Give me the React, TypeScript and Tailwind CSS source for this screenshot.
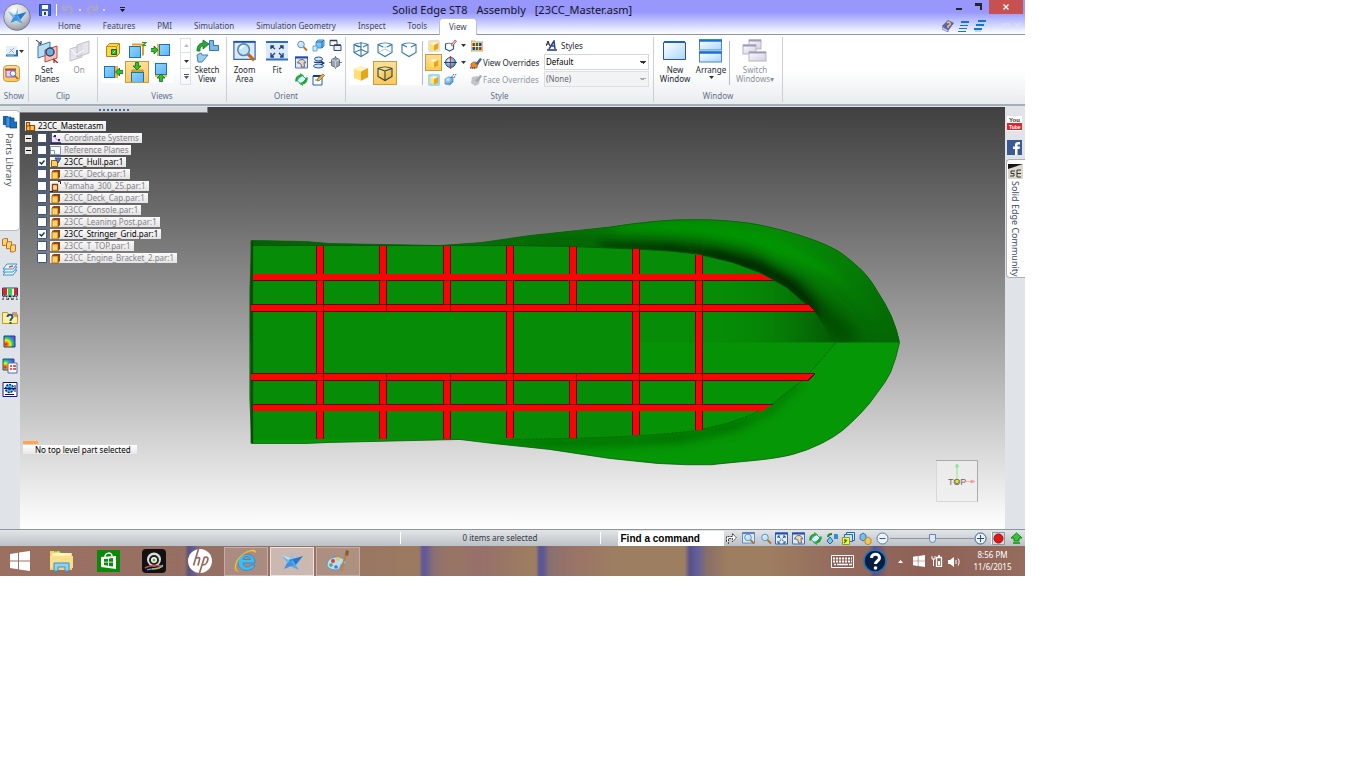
import React, { useState } from "react";

type IconProps = { w?: number; h?: number; children: React.ReactNode; className?: string; box?: string };

/** Small pixel-grid drawing; its user units are pixels unless a box is given. */
function Icon({ w = 12, h, children, className = "", box }: IconProps) {
  const height = h ?? w;
  return (
    <svg width={w} height={height} viewBox={box ?? `0 0 ${w} ${height}`} className={`shrink-0 ${className}`} aria-hidden="true">
      {children}
    </svg>
  );
}

function Caret({ color = "#333", className = "" }: { color?: string; className?: string }) {
  return (
    <Icon w={5} h={3} className={className}>
      <path d="M0 0h5L2.500 3z" fill={color} />
    </Icon>
  );
}

function Defs() {
  return (
    <svg width="0" height="0" className="absolute" aria-hidden="true">
      <defs>
        <linearGradient id="blue" x1="0" y1="0" x2="1" y2="1"><stop offset="0" stopColor="#8fd4fb" /><stop offset="1" stopColor="#5cb5f5" /></linearGradient>
        <linearGradient id="pane" x1="0" y1="0" x2="1" y2="1"><stop offset="0" stopColor="#fff" /><stop offset="1" stopColor="#a9d6fa" /></linearGradient>
        <linearGradient id="greyPane" x1="0" y1="0" x2="1" y2="1"><stop offset="0" stopColor="#fbfbfd" /><stop offset="1" stopColor="#d2d0df" /></linearGradient>
        <linearGradient id="gold" x1="0" y1="0" x2="1" y2="1"><stop offset="0" stopColor="#fff0a8" /><stop offset="1" stopColor="#efae18" /></linearGradient>
        <radialGradient id="orb" cx=".4" cy=".25" r=".8"><stop offset="0" stopColor="#fff" /><stop offset=".6" stopColor="#c9ccd2" /><stop offset="1" stopColor="#8d9299" /></radialGradient>
        <radialGradient id="ball" cx=".35" cy=".3" r=".8"><stop offset="0" stopColor="#d9f1ff" /><stop offset="1" stopColor="#2f7dc0" /></radialGradient>
        <radialGradient id="heat" cx=".2" cy=".75" r=".95"><stop offset="0" stopColor="#f40d0d" /><stop offset=".22" stopColor="#fb9a0a" /><stop offset=".4" stopColor="#f4f01c" /><stop offset=".58" stopColor="#24d84a" /><stop offset=".76" stopColor="#1d8ef0" /><stop offset="1" stopColor="#a423df" /></radialGradient>
      </defs>
    </svg>
  );
}

const Arrow = ({ t }: { t: string }) => <path d="M0-4 4 0H1.500V3.500H-1.500V0H-4z" fill="#2fc12f" stroke="#0b6d16" strokeWidth=".8" transform={t} />;

const Lens = ({ w = 13, back }: { w?: number; back?: React.ReactNode }) => (
  <Icon w={w} box="0 0 13 13">
    {back}
    <path d="m8.500 8 3.500 3.500" stroke="#c4691d" strokeWidth="1.800" />
    <circle cx="6" cy="5.500" r="3.300" fill="#bfe6fd" stroke="#5b87b0" strokeWidth=".9" />
    <path d="M4.200 5a2 2 0 0 1 2-1.500" stroke="#fff" fill="none" />
  </Icon>
);

const ZoomAreaBack = <><path d="M.5 1h12v10H.5z" fill="#dcebfc" stroke="#3768b8" strokeWidth=".7" /><path d="M.3 1h12.400" stroke="#1d4fae" /></>;

const FitIcon = ({ w = 13 }: { w?: number }) => (
  <Icon w={w} h={w} box="0 0 13 13">
    <path d="M.5 1h12v11H.5z" fill="#e4f0fd" stroke="#3563b9" />
    <path d="M0 1.500h13" stroke="#1d4fae" strokeWidth="2" />
    <path d="m3.500 4.500 6 5.500M9.500 4.500l-6 5.500" stroke="#1b3d95" fill="none" strokeDasharray="2.500 2" />
    <path d="M3 6V4h2m3 0h2v2m0 3v2H8m-3 0H3V9" stroke="#1b3d95" fill="none" />
  </Icon>
);

const PanIcon = () => (
  <Icon w={13}>
    <path d="M.5 1h12v11H.5z" fill="#dbe9fa" stroke="#4770b8" />
    <path d="M0 1.500h13" stroke="#244fa8" strokeWidth="2" />
    <path d="M2.500 7c1-3 3-3.500 4.500-3.500S10.500 5 10.500 7L9 6.500 9.500 11h-3L6 8 4 7z" fill="#e3d8cb" stroke="#6d5a4c" strokeWidth=".9" />
  </Icon>
);

const RotateIcon = () => (
  <Icon w={13}>
    <path d="M7 2 2 7.500 6 11l5-5z" fill="#d8f3ff" stroke="#4390be" />
    <path d="M1.500 8.500a5 5 0 0 1 4-6M11.500 4.500a5 5 0 0 1-4.500 6" fill="none" stroke="#1fa42c" strokeWidth="2.200" />
    <path d="m5 0 4 2.500-4 2zM8 13l-4-2.500L8 8.500z" fill="#2bb536" />
  </Icon>
);

const SpinIcon = () => (
  <Icon w={13}>
    <ellipse cx="6.500" cy="3" rx="4" ry="2" fill="#cfe7f8" stroke="#1e4e94" />
    <ellipse cx="6.500" cy="10" rx="5" ry="2" fill="#cfe7f8" stroke="#1e4e94" />
    <path d="M2 6c3 1.500 6-1 9 1M9 5l3 2-3 2" stroke="#1d3c7e" strokeWidth="1.300" fill="none" />
  </Icon>
);

const CubeSmall = () => (
  <Icon w={13}>
    <path d="M1 10 6 5" stroke="#4a6e96" strokeDasharray="2 1" />
    <path d="M4 3 6 1h6v6l-2 2H4z" fill="url(#blue)" stroke="#3f91cb" />
    <path d="M4 3h6v6M10 3l2-2" fill="none" stroke="#2d6ea5" />
    <path d="M1 7h4v5H1z" fill="#ccecff" stroke="#4a93c9" strokeWidth=".8" />
  </Icon>
);

const CopyWin = () => (
  <Icon w={13}>
    <path d="M1 1.500h7v5H1z" fill="#fff" stroke="#344c79" />
    <path d="M5 6.500h7v5H5z" fill="#e9f1fa" stroke="#344c79" />
    <path d="M1 1.500h7M5 6h7" stroke="#303a50" strokeWidth="1.500" />
  </Icon>
);

const GreyTarget = () => (
  <Icon w={13}>
    <path d="M6.500 0v13M0 6.500h13" stroke="#7b8690" />
    <path d="M2.500 3.500 6.500 1.500l4 2v6l-4 2-4-2z" fill="#98a4ad" stroke="#65717d" />
    <path d="M2.500 3.500 6.500 5.500l4-2M6.500 5.500v6" fill="none" stroke="#d7dfe5" strokeWidth=".8" />
  </Icon>
);

const SketchPen = () => (
  <Icon w={13}>
    <path d="M1 3h9v9H1z" fill="#fff" stroke="#2a5da8" />
    <path d="M1 3h9" stroke="#143e88" strokeWidth="2" />
    <path d="m5 8 1-3 5-4 1.500 1.500-5 5z" fill="#f5b83a" stroke="#805517" strokeWidth=".7" />
    <path d="M3 7h3" stroke="#3ba84a" />
  </Icon>
);

function Cube({ w = 18, fill = "none", stroke = "#2568a6", extra }: { w?: number; fill?: string; stroke?: string; extra?: React.ReactNode }) {
  return (
    <Icon w={w} box="0 0 18 18">
      <path d="M2 4.500c4-2 10-2 14 0v8L9 16.500 2 12.500z" fill={fill} stroke={stroke} strokeWidth="1.100" />
      <path d="M2 4.500 9 7l7-2.500M9 7v9.500" fill="none" stroke={stroke} strokeWidth="1.100" />
      {extra}
    </Icon>
  );
}

const OpenCube = ({ extra }: { extra?: React.ReactNode }) => (
  <Icon w={18}>
    <path d="M2 4.500c4-2 10-2 14 0v8L9 16.500 2 12.500zM2 4.500 7 7M16 4.500 11 7" fill="none" stroke="#2f7ab5" strokeWidth="1.100" />
    {extra}
  </Icon>
);

const GoldCube = ({ w = 12, tint = "none" }: { w?: number; tint?: string }) => (
  <Icon w={w} box="0 0 14 14">
    <rect x="0" y="0" width="14" height="14" rx="2" fill={tint} />
    <path d="M2 4 7 6v6.500L2 10.500z" fill="#ffdf75" />
    <path d="M2 4 6.500 2 12 3.500 7 6z" fill="#fff3bf" />
    <path d="M7 6 12 3.500V10l-5 2.500z" fill="#e5a719" />
  </Icon>
);

function ViewFace({ side }: { side: "front" | "back" | "left" | "right" | "top" | "bottom" }) {
  const sq = (x: number, y: number, w: number, h: number) => <rect x={x} y={y} width={w} height={h} fill="url(#blue)" stroke="#1d6fc1" />;
  return (
    <Icon w={20}>
      {side === "front" && (<><path d="M3.500 6.500 6.500 3.500h10v10l-3 3h-10z" fill="#ffd54b" stroke="#b8860b" /><path d="M3.500 6.500h10v10M13.500 6.500l3-3" fill="none" stroke="#c3920f" /><path d="M8.500 9.500h5v5h-5z" fill="#32ba32" stroke="#0d7017" /><path d="m10 13 2-2" stroke="#d7ffbe" /></>)}
      {side === "back" && (<><path d="M5 4.500h11v11" fill="none" stroke="#e5a018" strokeWidth="2" />{sq(2.5, 6.5, 11, 11)}<path d="M15 2.500h4l-3 3h3" fill="none" stroke="#1d9b29" strokeWidth="1.200" /></>)}
      {side === "left" && (<><path d="M6 4h2v12H6z" fill="#f0b429" />{sq(8.5, 4.5, 10, 11)}<Arrow t="translate(3 10) rotate(90)" /></>)}
      {side === "right" && (<><path d="M12 4h3v12h-3z" fill="#f0b429" />{sq(1.5, 4.5, 10, 11)}<Arrow t="translate(16.500 10) rotate(-90)" /></>)}
      {side === "top" && (<><path d="M5 8h11v2H5z" fill="#f5c339" stroke="#986d18" strokeWidth=".7" />{sq(4.5, 10.5, 12, 10)}<Arrow t="translate(10 4) rotate(180)" /></>)}
      {side === "bottom" && (<>{sq(4.5, 1.5, 11, 11)}<path d="M4 13h12v2H4z" fill="#f5c339" /><Arrow t="translate(10 16)" /></>)}
    </Icon>
  );
}

const WindowIcon = () => (
  <Icon w={24} h={24}>
    <path d="M.5 3.500h22v17H.5z" fill="url(#pane)" stroke="#2853b4" />
    <path d="M1 3h21" stroke="#1f62c0" strokeWidth="2" />
  </Icon>
);
const ArrangeIcon = () => (
  <Icon w={24} h={24}>
    {[1, 13].map((y) => (
      <g key={y}>
        <rect x=".5" y={y} width="22" height="10" fill="url(#pane)" stroke="#4386d3" />
        <path d={`M0 ${y + 0.5}h23`} stroke="#1d6fd3" strokeWidth="2.500" />
      </g>
    ))}
  </Icon>
);
const SwitchIcon = () => (
  <Icon w={26} h={24}>
    {[[7, 1, 12], [1, 6, 13], [7, 13, 17]].map(([x, y, w]) => (
      <g key={y}>
        <rect x={x} y={y} width={w} height="9" fill="url(#greyPane)" stroke="#b7b4ca" />
        <path d={`M${x} ${y + 0.5}h${w}`} stroke="#9e9bb8" strokeWidth="2" />
      </g>
    ))}
  </Icon>
);

const SolidEdgeMark = () => (
  <>
    <path d="M1 6 13 10 10 19z" fill="#c6e2f8" />
    <path d="M13 2v9L8 14z" fill="#8fc3ee" />
    <path d="M9 11 23 7 15 17z" fill="#1f7bd2" />
    <path d="M12 10 19 21 10 17z" fill="#5aa8ea" />
    <path d="M4 20 9 10 14 16z" fill="#3c93df" />
    <path d="M1 6 10 12 7 14z" fill="#78b1e0" />
  </>
);

function Group({ label, className, children }: { label: string; className: string; children: React.ReactNode }) {
  return (
    <section className={`flex shrink-0 flex-col border-r border-[#ccd0d6] ${className}`}>
      <div className="flex h-[53px] items-start">{children}</div>
      <h2 className="text-center text-[8px] leading-3 text-[#60718a]">{label}</h2>
    </section>
  );
}

function BigButton({ icon, lines, dim, caret, className }: { icon: React.ReactNode; lines: string[]; dim?: boolean; caret?: boolean; className: string }) {
  return (
    <button className={`flex shrink-0 flex-col items-center whitespace-nowrap text-[8px] leading-[9px] ${dim ? "text-[#8d929b]" : "text-[#1c2733]"} ${className}`}>
      <span className="flex h-7 items-center">{icon}</span>
      {lines.map((l) => <span key={l}>{l}</span>)}
      {caret && <Caret className="mt-0.5" />}
    </button>
  );
}

const hot = "border border-[#c79a45] bg-gradient-to-b from-[#fbdf93] to-[#ffc955]";

function IconButton({ label, on, className = "size-[17px]", children }: { label: string; on?: boolean; className?: string; children: React.ReactNode }) {
  return <button aria-label={label} className={`flex shrink-0 items-center justify-center ${on ? hot : ""} ${className}`}>{children}</button>;
}

const tabs = ["Home", "Features", "PMI", "Simulation", "Simulation Geometry", "Inspect", "Tools", "View"];

function Header() {
  return (
    <header className="relative border-b border-[#8a97a3] bg-gradient-to-b from-[#9797fc] from-35% to-white">
      <button aria-label="Application menu" className="absolute left-[3px] top-[3px]">
        <Icon w={28} box="0 0 28 28">
          <circle cx="14" cy="14" r="13.300" fill="url(#orb)" stroke="#74798a" strokeWidth=".9" />
          <g transform="translate(4 3) scale(.85)"><SolidEdgeMark /></g>
        </Icon>
      </button>
      <div className="grid h-[19px] grid-cols-[1fr_auto_1fr] items-center">
        <div className="flex h-[14px] items-center gap-[5px] pl-[39px]">
          <IconButton label="Save" className="size-[12px]">
            <Icon w={12}><path d="M.5.5h11v11H.5z" fill="#3760c0" stroke="#25479a" /><path d="M3 1h6v4H3z" fill="#fff" /><path d="M3 7h6v5H3z" fill="#e7eefc" /><path d="M5 8h2v3H5z" fill="#25479a" /></Icon>
          </IconButton>
          <span className="h-3 w-px bg-white" />
          <IconButton label="Undo" className="size-[12px]"><Icon w={12}><path d="M1 1v5h5M1.500 5.500C5 1 10 2 10 6c0 3-2 4-5 5" fill="none" stroke="#a9a8c4" strokeWidth="2" /></Icon></IconButton>
          <span className="size-[2px] bg-[#d7d7f3]" />
          <IconButton label="Redo" className="size-[12px]"><Icon w={12}><path d="M11 1v5H6M10.500 5.500C7 1 2 2 2 6c0 3 2 4 5 5" fill="none" stroke="#a9a8c4" strokeWidth="2" /></Icon></IconButton>
          <span className="size-[2px] bg-[#d7d7f3]" />
          <button aria-label="Customize toolbar" className="ml-2.5 flex flex-col items-center gap-px"><span className="h-px w-[5px] bg-[#222]" /><Caret color="#111" /></button>
        </div>
        <h1 className="flex gap-[9px] text-[11px] leading-[18px] text-[#15151f]"><span>Solid Edge ST8</span><span>Assembly</span><span>[23CC_Master.asm]</span></h1>
        <div className="flex h-full items-start justify-end pr-0.5">
          <IconButton label="Minimize" className="h-[14px] w-5"><Icon w={6} h={6}><path d="M0 4h6v2H0z" fill="#24242c" /></Icon></IconButton>
          <IconButton label="Restore" className="h-[13px] w-5"><Icon w={7} h={7}><path d="M0 0h7v7H5V3H0z" fill="#24242c" /></Icon></IconButton>
          <IconButton label="Close" className="h-[14px] w-[34px] bg-[#c75050]"><Icon w={6}><path d="m.5.5 5 5m0-5-5 5" stroke="#fff" strokeWidth="1.300" /></Icon></IconButton>
        </div>
      </div>
      <div className="flex h-[15px] items-end justify-between">
        <nav className="flex pl-[47px] text-[8px] leading-[14px] text-[#42465c]">
          {tabs.map((t) => (
            <a key={t} href="#ribbon" className={t === "View" ? "-mb-px ml-px h-[17px] rounded-t-sm border border-b-0 border-[#b8bfcf] bg-white px-[9px] leading-[16px]" : "px-[11px] pt-px"}>{t}</a>
          ))}
        </nav>
        <div className="flex items-center gap-1 pb-0.5 pr-[3px]">
          <IconButton label="Help" className="h-3 w-3"><Icon w={12}><path d="M0 6 6 0l6 3-6 8z" fill="#5562ba" /><path d="m0 7 6 3v2L0 9z" fill="#e8e8f8" stroke="#4e559c" strokeWidth=".6" /><path d="M5 3c2-2 4 0 3 2L6 6v2" fill="none" stroke="#ffc44e" strokeWidth="1.500" /></Icon></IconButton>
          <IconButton label="Tile" className="h-3 w-3"><Icon w={12}><path d="M3 1h8v2H3zM2 5h8v1H2zM1 8h8v1H1zM0 11h8v1H0z" fill="#1475cc" /></Icon></IconButton>
          <IconButton label="Cascade" className="h-3 w-3"><Icon w={12}><path d="M4 0h8v2H4zM2 4h8v2H2zM0 8h8v2H0z" fill="#1475cc" /><path d="M1 10h6v2H1zM11 2h1v5h-1z" fill="#b9dcf6" /></Icon></IconButton>
          <Icon w={32} h={8}><path d="M2 5h5M13 2h6v4h-6zM25 1l5 5m0-5-5 5" fill="none" stroke="#dedff8" strokeWidth="1.200" /></Icon>
        </div>
      </div>
    </header>
  );
}

const plane = (c: string, f: string, x: number, y: number) => <path d={`M${x} ${y + 4}l12-4v12l-12 4z`} fill={f} stroke={c} fillOpacity=".75" />;

function Ribbon() {
  return (
    <div id="ribbon" className="flex border-b-2 border-[#a4aeb8] bg-gradient-to-b from-white from-50% to-[#e9ecef] pb-0.5 pt-[2px]">
      <Group label="Show" className="w-[29px]">
        <div className="flex flex-col items-start gap-[5px] pl-[3px] pt-1.5">
          <button aria-label="Show PMI" className="flex h-[17px] items-center gap-px pl-0.5">
            <Icon w={13}><path d="M1 1h11v10H1z" fill="#e5f1fa" /><path d="M1 10.500h11V5" stroke="#2c6eb4" strokeWidth="2" fill="none" /><path d="m4 8 5-5M5 4l4 4" stroke="#9ba7b9" /><path d="M2 9h7v2H2z" fill="#63a9dd" /></Icon>
            <Caret />
          </button>
          <IconButton label="PathFinder" on className="size-[17px] rounded-sm"><Icon w={14}><path d="M1 3h9v7H1z" fill="#e8cdf0" stroke="#9257a6" /><path d="M0 2.500h11" stroke="#b34d37" strokeWidth="2" /><circle cx="8" cy="6.500" r="2.800" fill="#eef6ff" stroke="#5a6fc0" /><path d="m10 9 3 3" stroke="#b45e1c" strokeWidth="1.600" /></Icon></IconButton>
        </div>
      </Group>
      <Group label="Clip" className="w-[69px]">
        <BigButton className="ml-0.5 w-8" lines={["Set", "Planes"]} icon={<Icon w={24}>{plane("#3d7aa9", "#9cd7ee", 3, 3)}{plane("#c8453b", "#f7a9a2", 10, 7)}<circle cx="15" cy="13" r="4" fill="#74afd8" stroke="#274c80" strokeWidth="1.500" /><path d="m1 1 5 4M3 5h3V2" stroke="#17275b" fill="none" /><path d="m18 20 5 4M19 20v4" stroke="#a51e1e" strokeWidth="1.200" fill="none" /></Icon>} />
        <BigButton className="w-8" dim lines={["On"]} icon={<Icon w={24}>{plane("#c2bfce", "#dddbe5", 3, 6)}{plane("#c2bfce", "#dddbe5", 10, 2)}<path d="m4 10 5 6 8-5" stroke="#fff" fill="none" /></Icon>} />
      </Group>
      <Group label="Views" className="w-[129px]">
        <div className="ml-[3px] mt-px grid grid-cols-3 bg-white">
          <IconButton label="Front view" className="h-[23px] w-6"><ViewFace side="front" /></IconButton>
          <IconButton label="Back view" className="h-[23px] w-6"><ViewFace side="back" /></IconButton>
          <IconButton label="Left view" className="h-[23px] w-6"><ViewFace side="left" /></IconButton>
          <IconButton label="Right view" className="h-[22px] w-6"><ViewFace side="right" /></IconButton>
          <IconButton label="Top view" on className="h-[22px] w-6"><ViewFace side="top" /></IconButton>
          <IconButton label="Bottom view" className="h-[22px] w-6"><ViewFace side="bottom" /></IconButton>
        </div>
        <div className="ml-[7px] mt-px grid w-[11px] grid-rows-3 border border-[#dde0e5]">
          <IconButton label="Scroll up" className="h-[14px] w-[10px] border-b border-[#dde0e5]"><Caret color="#b9bdc4" className="rotate-180" /></IconButton>
          <IconButton label="Scroll down" className="h-[15px] w-[10px] border-b border-[#dde0e5]"><Caret /></IconButton>
          <IconButton label="More views" className="h-[15px] w-[10px]"><Icon w={5} h={5}><path d="M0 0h5v1H0zM0 2h5L2.500 5z" fill="#555" /></Icon></IconButton>
        </div>
        <BigButton className="w-8" lines={["Sketch", "View"]} icon={<Icon w={24}><path d="M2 12c0-6 3-8 6-8V1l6 4-6 5V7C6 7 5 8 5 12z" fill="#29a83a" stroke="#0c6e1d" strokeWidth=".8" /><path d="M14.500 1.500h4v5h5v5h-9z" fill="#7cb9e8" stroke="#2f76b3" /><path d="m2 16 4-2 1 2h6l-6 7H3z" fill="#9bcdf0" stroke="#3a80bd" /></Icon>} />
      </Group>
      <Group label="Orient" className="w-[119px]">
        <BigButton className="ml-px w-[33px]" lines={["Zoom", "Area"]} icon={<Lens w={23} back={ZoomAreaBack} />} />
        <BigButton className="w-8" lines={["Fit"]} icon={<Icon w={22}><path d="M0 2h22v18H0z" fill="#dcebfb" /><path d="M0 2h22M0 19.500h22" stroke="#2e6fc4" strokeWidth="2" /><path d="m5 6 4 3m4 0 4-3M9 13l-4 4m8-4 4 4M5 9V6h3m6 0h3v3M5 13v4h3m6 0h3v-4" stroke="#203e92" strokeWidth="1.300" fill="none" /></Icon>} />
        <div className="grid grid-cols-3">
          <IconButton label="Zoom"><Lens back={<path d="M5.500 3v4m-1-3 1-2 1 2" stroke="#1d3982" />} /></IconButton>
          <IconButton label="Look at face"><CubeSmall /></IconButton>
          <IconButton label="Previous view"><CopyWin /></IconButton>
          <IconButton label="Pan"><PanIcon /></IconButton>
          <IconButton label="Spin about"><SpinIcon /></IconButton>
          <IconButton label="Common views"><GreyTarget /></IconButton>
          <IconButton label="Rotate"><RotateIcon /></IconButton>
          <IconButton label="Sketch orientation"><SketchPen /></IconButton>
        </div>
      </Group>
      <Group label="Style" className="w-[308px]">
        <div className="ml-[3px] grid grid-cols-3 bg-white">
          <IconButton label="Wireframe" className="h-6 w-6"><OpenCube extra={<path d="M9 2v14M2 12.500l7-3 7 3M4 5.500l5 1.500" fill="none" stroke="#2568a6" />} /></IconButton>
          <IconButton label="Visible and hidden edges" className="h-6 w-6"><OpenCube extra={<path d="M3 12 9 9l6 3M7 7h4" fill="none" stroke="#a8cae2" />} /></IconButton>
          <IconButton label="Visible edges" className="h-6 w-6"><OpenCube /></IconButton>
          <IconButton label="Shaded" className="h-6 w-6"><GoldCube w={20} /></IconButton>
          <IconButton label="Shaded with visible edges" on className="h-6 w-6"><Cube fill="url(#gold)" stroke="#23455f" /></IconButton>
        </div>
        <span className="ml-px mt-1 h-11 w-px bg-[#b8bcc2]" />
        <div className="ml-[2px] grid grid-cols-[17px_17px_8px]">
          <IconButton label="Drop shadow"><GoldCube tint="#e9e1c8" /></IconButton>
          <IconButton label="Sharpen"><Icon w={13}><path d="M1.500 5c2-1 6-1 8 0v5l-4 2-4-2z" fill="#fff" stroke="#2c5c8c" strokeWidth="1.200" /><path d="m7 6 4-5 1.500 1-4 5z" fill="#f2d06a" stroke="#a5538f" strokeWidth=".8" /></Icon></IconButton>
          <IconButton label="Sharpen options" className="h-[17px] w-2"><Caret /></IconButton>
          <IconButton label="Floor shadow" on><GoldCube /></IconButton>
          <IconButton label="Section"><Icon w={13}><circle cx="6.500" cy="6.500" r="5" fill="url(#ball)" stroke="#285684" /><path d="M6.500 0v13" stroke="#c53943" strokeWidth="1.300" /><path d="M0 6.500h13" stroke="#27486c" /></Icon></IconButton>
          <IconButton label="Section options" className="h-[17px] w-2"><Caret /></IconButton>
          <IconButton label="Reflection"><GoldCube tint="#9dd9f9" /></IconButton>
          <IconButton label="High quality"><Icon w={13}><path d="M1 6 4 4h5v5l-3 3-5-1z" fill="url(#ball)" stroke="#69a0c8" strokeWidth=".8" /><path d="m7 5 3-4M10 5l2-4" stroke="#456b98" strokeDasharray="2 1" /></Icon></IconButton>
        </div>
        <div className="ml-px grid grid-cols-[76px_105px] text-[8px] text-[#1c2733]">
          <IconButton label="Color manager" className="h-[17px] w-[17px]"><Icon w={12}><path d="M0 1h4l1 1h7v9H0z" fill="#f7e3a5" stroke="#a08c4e" strokeWidth=".7" />{["#b52424", "#197a2a", "#1b2fb0"].map((c, i) => <g key={c} fill={c}><rect x={1.5 + i * 3.3} y="3" width="2.400" height="3" /><rect x={1.5 + (2 - i) * 3.3} y="7" width="2.400" height="3" /></g>)}</Icon></IconButton>
          <button className="flex h-[17px] items-center gap-1 pl-0.5"><Icon w={11}><path d="M0 6 2 1l2 5M1 4h2" stroke="#222" fill="none" /><path d="M3 9 8 1l1 8M5 6h4" stroke="#24409a" strokeWidth="1.500" fill="none" /><path d="M1 10h10" stroke="#1d337e" strokeWidth="1.500" /></Icon>Styles</button>
          <button className="flex h-[17px] items-center gap-px whitespace-nowrap pl-0.5"><Icon w={12}><path d="M1 7c2-3 5-2 7-1l-1 5H1z" fill="#e98a34" stroke="#9e4f17" strokeWidth=".7" /><path d="m5 7 5-6 2 1-4 6z" fill="#42658d" /><path d="M0 11h6" stroke="#222" strokeDasharray="1 1" /></Icon>View Overrides</button>
          <select aria-label="View style" className="h-4 appearance-none border border-[#d3d7dd] bg-white bg-[linear-gradient(45deg,transparent_50%,#333_50%),linear-gradient(-45deg,transparent_50%,#333_50%)] bg-[length:3px_3px] bg-[position:right_5px_center,right_2px_center] bg-no-repeat px-px text-[8px] text-black"><option>Default</option></select>
          <button disabled className="flex h-[17px] items-center gap-px whitespace-nowrap pl-0.5 text-[#92979e]"><Icon w={12}><path d="M2 3 7 2l3 2-1 6-4 2-4-3z" fill="#c5c3cd" /><path d="m5 7 5-6 2 1-4 6z" fill="#a6a5b1" /></Icon>Face Overrides</button>
          <select aria-label="Face style" disabled className="h-4 appearance-none border border-[#dedfe2] bg-[#f2f3f4] bg-[linear-gradient(45deg,transparent_50%,#aaa_50%),linear-gradient(-45deg,transparent_50%,#aaa_50%)] bg-[length:3px_3px] bg-[position:right_5px_center,right_2px_center] bg-no-repeat px-px text-[8px] text-[#676b70] opacity-100"><option>(None)</option></select>
        </div>
      </Group>
      <Group label="Window" className="w-[129px]">
        <BigButton className="ml-[3px] w-9" lines={["New", "Window"]} icon={<WindowIcon />} />
        <BigButton className="w-9" caret lines={["Arrange"]} icon={<ArrangeIcon />} />
        <span className="mt-1 h-11 w-px bg-[#b8bcc2]" />
        <BigButton className="w-[50px]" dim lines={["Switch", "Windows▾"]} icon={<SwitchIcon />} />
      </Group>
    </div>
  );
}

const OrangePart = () => <Icon w={11}><path d="M2 2 4 1h6v7l-2 2H2z" fill="#8e3f0c" /><path d="M2 3h6v7H2z" fill="#ffd35d" stroke="#a85f14" strokeWidth=".8" /></Icon>;
const AssemblyIcon = () => <Icon w={11}><path d="M1.500 1.500h3v3h5v5h-8z" fill="#ffc64c" stroke="#93470a" strokeWidth="1.200" /><path d="M1.500 5h3.500v4.500" fill="none" stroke="#93470a" /></Icon>;

type Row = { name: string; on?: boolean; icon?: React.ReactNode; group?: boolean };
const rows: Row[] = [
  { name: "Coordinate Systems", group: true, icon: <Icon w={11}><path d="M1 0v10h10" fill="none" stroke="#14206e" strokeWidth="1.500" /><path d="m3 3 7 6" stroke="#a23bc2" strokeDasharray="2 1" /><path d="M4 2h2v2H4zM8 6h2v2H8z" fill="#302070" /></Icon> },
  { name: "Reference Planes", group: true, icon: <Icon w={11}><path d="M.5 1.500h10v8H.5z" fill="#fff" stroke="#7c97d6" /><path d="M.5 9.500v-4h4v4" fill="none" stroke="#7c97d6" /></Icon> },
  { name: "23CC_Hull.par:1", on: true, icon: <Icon w={11}><path d="M1.500 3.500h6v6h-6z" fill="#ffd35d" stroke="#a15a12" /><path d="M5 1h6L8 6z" fill="#4582d2" stroke="#143c8a" strokeWidth=".8" /></Icon> },
  { name: "23CC_Deck.par:1" },
  { name: "Yamaha_300_25.par:1", icon: <Icon w={11}><path d="M2.500 3.500h5v6h-5z" fill="#ffe39b" stroke="#8e3f0c" strokeWidth="1.300" /><path d="M0 10.500h3M8 .5h2.500V3" stroke="#222" fill="none" /></Icon> },
  { name: "23CC_Deck_Cap.par:1" },
  { name: "23CC_Console.par:1" },
  { name: "23CC_Leaning Post.par:1" },
  { name: "23CC_Stringer_Grid.par:1", on: true },
  { name: "23CC_T_TOP.par:1" },
  { name: "23CC_Engine_Bracket_2.par:1" },
];

const tag = "flex h-[10px] items-center bg-gradient-to-b from-[#fafafa] to-[#e3e3e3]";

function PathFinder() {
  const [shown, setShown] = useState(rows.map((r) => !!r.on));
  return (
    <div className="pl-[5px] pt-[7px] text-[8px] leading-[10px]">
      <div className="flex h-3 items-center"><span className={`${tag} gap-0.5 pr-0.5 text-black`}><AssemblyIcon />23CC_Master.asm</span></div>
      <ul>
        {rows.map((r, i) => (
          <li key={r.name} className="flex h-3 items-center">
            {r.group
              ? <button aria-label={`Expand ${r.name}`} className="flex h-[7px] w-[7px] items-center justify-center bg-[#e8e8e0]"><span className="h-px w-[5px] bg-black" /></button>
              : <span className="w-[7px]" />}
            <label className="ml-[5px] flex items-center gap-[3px]">
              <span className="grid place-items-center">
                <input type="checkbox" checked={shown[i]} onChange={() => setShown(shown.map((v, k) => (k === i ? !v : v)))} className="peer col-start-1 row-start-1 size-[10px] appearance-none rounded-[1px] border border-[#35588c] bg-white" />
                <Icon w={6} h={5} className="pointer-events-none invisible col-start-1 row-start-1 peer-checked:visible"><path d="m.5 2 2 2 3-3.500" stroke="#112d55" strokeWidth="1.400" fill="none" /></Icon>
              </span>
              <span className={`${tag} gap-[3px] pr-[3px] ${shown[i] ? "text-black" : "text-[#85818a]"}`}>{r.icon ?? <OrangePart />}{r.name}</span>
            </label>
          </li>
        ))}
      </ul>
    </div>
  );
}

const hull = "M252 241 306 242 330 244 385 245 440 246 482 243 530 236 573 231.500 610 227.500 Q636 223.500 659 221.500 T711 220.300 Q731 221 749 223.500 Q765 226 780 230 Q800 235 817 241.500 T843 254.500 T863 271.500 Q872 281 878 292 Q886 304 892 317 Q898 332 900 343 Q897 358 891 373 Q886 383 878 393 Q870 405 860 415 T843 431 Q834 438 822 444 Q808 451 793 455 T750 461.500 T712 465.300H687L658 464 610 459 550 450 493 444 460 440 330 443 306 444H252L250 400V290z";
const innerTop = "M252 246H510L573 247 636 249.500 670 251.500 698 254.500 733 263 760 273 787 288 803 302 815 312 836 343";
const deck = innerTop + " 823 359 810 373 800 383 772 405 750 416 727 424 698 431 670 434 627 437 577 439 510 440H252z";
const innerBottom = "M836 343 823 359 810 373 800 383 772 405 750 416 727 424 698 431 670 434 627 437 577 439 510 440";
const ribs = [
  { x: 316, t: 246, b: 440, full: true }, { x: 379, t: 246, b: 440 }, { x: 443, t: 246, b: 440 }, { x: 506, t: 246, b: 439, full: true },
  { x: 569, t: 247, b: 439 }, { x: 632, t: 249, b: 436, full: true }, { x: 695, t: 255, b: 431, full: true },
];

function Boat() {
  return (
    <svg viewBox="20 108 985 421" className="col-start-1 row-start-1 h-full w-full" role="img" aria-label="Hull model, top view">
      <defs>
        <clipPath id="hullClip"><path d={hull} /></clipPath>
        <clipPath id="deckClip"><path d={deck} /></clipPath>
        <clipPath id="upper"><path d="M240 200H910V343H240z" /></clipPath>
        <linearGradient id="topHull" x1="0" x2="1"><stop offset="0" stopColor="#055f05" /><stop offset=".6" stopColor="#058005" /><stop offset=".8" stopColor="#058c05" /><stop offset="1" stopColor="#057205" /></linearGradient>
        <linearGradient id="deckFade" x1="0" x2="1"><stop offset=".8" stopColor="#078407" stopOpacity="0" /><stop offset="1" stopColor="#045304" /></linearGradient>
        <linearGradient id="bowFade" x1="0" y1="0" x2="0" y2="1"><stop offset=".4" stopColor="#046004" stopOpacity="0" /><stop offset="1" stopColor="#046304" stopOpacity=".8" /></linearGradient>
        <filter id="soft" x="-20%" y="-40%" width="140%" height="180%"><feGaussianBlur stdDeviation="9" /></filter>
        <filter id="soft2" x="-20%" y="-40%" width="140%" height="180%"><feGaussianBlur stdDeviation="4" /></filter>
      </defs>
      <path d={hull} fill="#059705" />
      <g clipPath="url(#hullClip)">
        <path d="M240 200H910V343H240z" fill="url(#topHull)" />
        <g clipPath="url(#upper)">
          <path d="M610 228C720 212 810 232 880 320L850 290C800 255 740 236 620 234z" fill="#069806" filter="url(#soft2)" />
          <path d="M800 220H910V343H800z" fill="url(#bowFade)" />
          <path d="M470 244 560 238 640 240 700 243 750 254 800 280 840 318 862 343 836 343 803 300 760 271 698 252 636 247z" fill="#034203" filter="url(#soft)" />
          <path d="M600 246 670 247 720 253 760 264 795 284 812 302 820 318 803 302 787 288 760 273 698 254z" fill="#012401" stroke="#022c02" strokeWidth="5" filter="url(#soft2)" />
        </g>
        <path d="M490 442 636 438 698 432 760 416 800 384 770 412 735 430 680 442 560 447z" fill="#046204" stroke="#046a04" strokeWidth="4" opacity=".75" filter="url(#soft2)" />
      </g>
      <path d={deck} fill="#068c06" />
      <g clipPath="url(#deckClip)">
        <path d="M252 246H840V343H252z" fill="url(#deckFade)" />
        <path d="M640 343H840V440H640z" fill="#059705" opacity=".6" />
      </g>
      <path d={innerTop} fill="none" stroke="#045004" strokeWidth=".8" />
      <path d={innerBottom} fill="none" stroke="#056005" strokeWidth=".8" strokeDasharray="3 1" />
      <path d={hull} fill="none" stroke="#086008" strokeWidth=".8" />
      <path d="M252 241V444" stroke="#064e06" strokeWidth="2.500" />
      <g shapeRendering="crispEdges">
        {ribs.map((r) => (
          <g key={r.x}>
            {(r.full ? [[r.t, r.b]] : [[r.t, 311], [374, r.b]]).map(([a, b]) => (
              <g key={a}><rect x={r.x} y={a} width="8" height={b - a} fill="#6d0000" /><rect x={r.x + 1} y={a} width="6" height={b - a} fill="#fa0505" /></g>
            ))}
          </g>
        ))}
        <path d="M253 274H761L774 281H253z" fill="#6d0000" /><path d="M253 274H761L772 280H253z" fill="#fa0505" />
        <path d="M251 304H808L816 312H251z" fill="#6d0000" /><path d="M251 305H808L814 311H251z" fill="#fa0505" />
        <path d="M251 374H815V375L808 382H251z" fill="#6d0000" /><path d="M251 375H814L807 381H251z" fill="#fa0505" />
        <path d="M253 405H773L762 412H253z" fill="#6d0000" /><path d="M253 406H771L762 412H253z" fill="#fa0505" />
        {ribs.map((r) => <path key={r.x} d={`M${r.x + 7.5} 305v7M${r.x + 7.5} 374v8`} stroke="#8d0000" />)}
      </g>
    </svg>
  );
}

function ViewCube() {
  return (
    <Icon w={43} h={43}>
      <path d="M.5.5h41v41H.5z" fill="#efefef" fillOpacity=".7" stroke="#d8d8d8" />
      <path d="M0 .5h41.500v41" stroke="#a9a9a9" fill="none" />
      <text x="12" y="25" fontSize="9" fontFamily="Liberation Sans, sans-serif" fill="#666">TOP</text>
      <path d="M21 21V4M19.500 7h3L21 4z" stroke="#8ee78e" fill="#8ee78e" />
      <path d="M24 21.500h14M35 20v3l4-1.500z" stroke="#f1a0a0" fill="#f1a0a0" strokeWidth=".8" />
      <circle cx="21" cy="21.500" r="2.200" fill="#e5e52f" stroke="#7e7e42" />
    </Icon>
  );
}

const sideIcons: [string, React.ReactNode][] = [
  ["Family of parts", <Icon w={16}>{[0, 4, 8].map((d) => <path key={d} d={`M${d + 0.5} ${d * 0.8 + 1.5}l2-1h3v6l-2 1h-3z`} fill="#ffd37c" stroke="#bd6f16" />)}</Icon>],
  ["Layers", <Icon w={16}>{[10, 7, 4].map((y) => <path key={y} d={`M1 ${y + 3}l4-5h10l-4 5z`} fill="#e9f5ff" stroke="#3c92d2" />)}<path d="m7 5 4-1" stroke="#d44" strokeWidth="1.300" /></Icon>],
  ["Sensors", <Icon w={16}><path d="M.5 2h15v8H.500z" fill="#fff" stroke="#124f87" /><path d="M1 2h4v7H1zM12 2h3v7h-3z" fill="#ed2020" /><path d="M6 2h4v7H6z" fill="#30d34d" /><path d="M1 14c0-6 4-6 4 0M6 14l2-5 2 5M11 14c0-6 4-6 4 0" stroke="#111" fill="none" strokeDasharray="2 1" /></Icon>],
  ["Feature library", <Icon w={16}><path d="M.5 2.500h5l1 2h9v9H.500z" fill="#fff1a0" stroke="#c69b1f" /><path d="M10 3h5M12 6h4" stroke="#c84b25" /><path d="M5.500 7c0-3 5-3 5 0 0 2-2 1-2 4M8.500 12v2" stroke="#1d5790" strokeWidth="2" fill="none" /></Icon>],
  ["Simulation", <Icon w={14}><path d="M1 1h11v11H1z" fill="url(#heat)" stroke="#273f79" /></Icon>],
  ["Simulation results", <Icon w={16}><path d="M1 1h11v11H1z" fill="url(#heat)" stroke="#125b94" /><path d="M6 5h9v10H6z" fill="#fff" stroke="#4b6fae" /><path d="M8 8h2m1 0h3M8 11h2m1 0h3" stroke="#d22" strokeWidth="1.300" /></Icon>],
  ["Engineering reference", <Icon w={16}><path d="M1 .500h14v14H1z" fill="#fff" stroke="#14177e" /><circle cx="7.500" cy="6.500" r="4" fill="#40c4e8" stroke="#10228c" strokeWidth="1.500" strokeDasharray="2 1" /><circle cx="7.500" cy="6.500" r="1.500" fill="#10228c" /><path d="M2 6.500h12M13 3v7M3 12.500h9" stroke="#10124c" /></Icon>],
];

function Workspace() {
  return (
    <div className="flex flex-1 bg-[#e0e4e8] pt-px">
      <aside className="flex w-5 shrink-0 flex-col items-center">
        <button className="mt-[3px] flex h-[121px] w-full flex-col items-center gap-1 rounded-r border border-l-0 border-[#b5bcc4] bg-white pt-[3px] text-[9px] text-[#4c4f60]">
          <Icon w={15}><path d="M1 2h5v9H1z" fill="#1a65b4" /><path d="M4 3h5v10H4z" fill="#3f94dc" stroke="#0f4c92" strokeWidth=".7" /><path d="M8 4h4v4h3v6H8z" fill="#1971c2" stroke="#0a437e" strokeWidth=".7" /></Icon>
          <span className="whitespace-nowrap leading-[11px] [writing-mode:vertical-rl]">Parts Library</span>
        </button>
        <div className="flex flex-col gap-0.5 pt-1">
          {sideIcons.map(([l, i]) => <IconButton key={l} label={l} className="h-[22px] w-5">{i}</IconButton>)}
        </div>
      </aside>
      <main className="grid flex-1 grid-cols-1 grid-rows-[minmax(0,1fr)] bg-gradient-to-b from-[#404040] to-white">
        <Boat />
        <div className="z-10 col-start-1 row-start-1 flex flex-col items-start justify-between">
          <div>
            <div className="flex h-[6px] w-[188px] items-center justify-center border-b border-r border-[#80848a] bg-[#d5d9dd]"><span className="w-[30px] border-t-2 border-dotted border-[#456a9b]" /></div>
            <PathFinder />
          </div>
          <div className="mb-[75px] ml-[3px]">
            <div className="h-[3px] w-[15px] bg-[#ffa54c]" />
            <p className="mt-px bg-gradient-to-b from-white to-[#e8e8e8] pl-3 pr-1.5 text-[8px] leading-[9px] text-black">No top level part selected</p>
          </div>
        </div>
        <div className="z-10 col-start-1 row-start-1 self-end justify-self-end pb-[26px] pr-[26px]"><ViewCube /></div>
      </main>
      <aside className="flex w-5 shrink-0 flex-col items-center pt-2">
        <IconButton label="YouTube" className="h-4 w-4"><Icon w={15} h={15}><path d="M0 0h15v15H0z" fill="#fff" /><path d="M0 7h15v7H0z" fill="#e0242b" /><text x="2" y="6" fontSize="6" fontWeight="bold" fontFamily="Liberation Sans, sans-serif" fill="#333">You</text><text x="2" y="12.500" fontSize="5" fontWeight="bold" fontFamily="Liberation Sans, sans-serif" fill="#fff">Tube</text></Icon></IconButton>
        <IconButton label="Facebook" className="mt-2 h-4 w-4"><Icon w={15}><path d="M0 0h15v15H0z" fill="#3b5998" /><path d="M8 15V9H6V6.500h2V5c0-2 1-3 3-3h2v2.500h-1.500c-.8 0-1 .4-1 1v1h2.500L12.500 9h-2v6z" fill="#fff" /></Icon></IconButton>
        <button className="mt-1 flex h-[119px] w-[19px] flex-col items-center gap-0.5 self-end rounded-l border border-r-0 border-[#a9b0b8] bg-white pt-1 text-[9px] text-[#3c4a63]">
          <Icon w={15}><path d="M0 0h15v15H0z" fill="#dcd9cf" /><path d="M0 0h15L0 5z" fill="#161616" /><path d="M7 7H3v2.500h3V12H2M13 6H9v7h4M9 9.500h4" stroke="#333" fill="none" /></Icon>
          <span className="whitespace-nowrap leading-[11px] [writing-mode:vertical-rl]">Solid Edge Community</span>
        </button>
      </aside>
    </div>
  );
}

function StatusBar() {
  const [zoom, setZoom] = useState(51);
  const b = "h-[17px] w-[16px]";
  return (
    <footer className="flex h-[17px] items-center border-t border-[#8d969f] bg-gradient-to-b from-[#e2e5e8] to-[#bcc1c6] text-[8px] text-[#303840]">
      <span className="h-3 flex-1 border-r border-white" />
      <span className="h-3 w-[200px] border-r border-white text-center leading-3">0 items are selected</span>
      <input aria-label="Find a command" defaultValue="Find a command" className="ml-[17px] h-[15px] w-[106px] bg-white px-[3px] font-[Liberation_Sans,sans-serif] text-[10px] font-bold text-black" />
      <IconButton label="Run command" className={b}><Icon w={13}><path d="M1.500 9.500v-5h6V1.500l4 4.500-4 3.500v-3h-4v5z" fill="#fff" stroke="#222" strokeWidth=".9" strokeDasharray="2 1" /></Icon></IconButton>
      <span className="flex w-[134px] justify-between pl-px">
        <IconButton label="Zoom area" className={b}><Lens back={ZoomAreaBack} /></IconButton>
        <IconButton label="Zoom" className={b}><Lens /></IconButton>
        <IconButton label="Fit" className={b}><FitIcon /></IconButton>
        <IconButton label="Pan" className={b}><PanIcon /></IconButton>
        <IconButton label="Rotate" className={b}><RotateIcon /></IconButton>
        <IconButton label="Sketch view" className={b}><Icon w={13}><path d="M1 9 4 5l3 4-3 3z" fill="#79c7e9" stroke="#1f6da5" /><path d="M2 5c0-3 2-3 4-3" stroke="#179027" strokeWidth="2" fill="none" /><path d="M8 2h3l1 1v4H8z" fill="#2c8edb" /></Icon></IconButton>
        <IconButton label="Views" className={b}><Icon w={13}><path d="M4.500.500h8v8h-8z" fill="#dff0ff" stroke="#1d67b5" /><path d="M2.500 2.500h8v7h-8z" fill="#c4e4fd" stroke="#1d67b5" /><path d="M.500 5.500h7v7h-7z" fill="#fbef45" stroke="#a09220" /><path d="m2 11 3-3M2 8h2" stroke="#168b29" strokeWidth="1.300" /></Icon></IconButton>
        <IconButton label="Styles" className={b}><Icon w={13}><path d="m1 3 3-2 3 2v4L4 9 1 7z" fill="#7abaf0" stroke="#2565a6" strokeWidth=".8" /><path d="m6 7 3-2 3 2v4l-3 2-3-2z" fill="#f6c84f" stroke="#a4791d" strokeWidth=".8" /></Icon></IconButton>
      </span>
      <IconButton label="Zoom out" className="ml-0.5 size-[13px]"><Icon w={13}><circle cx="6.500" cy="6.500" r="5.500" fill="#edf2f8" stroke="#5679a2" /><path d="M3.500 6.500h6" stroke="#345d8e" /></Icon></IconButton>
      <input aria-label="Zoom level" type="range" value={zoom} onChange={(e) => setZoom(+e.target.value)} className="ml-px h-3 w-[84px] appearance-none bg-[linear-gradient(#8b949e,#8b949e)] bg-[length:100%_1px] bg-center bg-no-repeat [&::-webkit-slider-thumb]:h-[9px] [&::-webkit-slider-thumb]:w-[7px] [&::-webkit-slider-thumb]:appearance-none [&::-webkit-slider-thumb]:rounded-b [&::-webkit-slider-thumb]:border [&::-webkit-slider-thumb]:border-[#6886ad] [&::-webkit-slider-thumb]:bg-[#dceafa]" />
      <IconButton label="Zoom in" className="size-[13px]"><Icon w={13}><circle cx="6.500" cy="6.500" r="5.500" fill="#edf2f8" stroke="#345d8e" /><path d="M3 6.500h7M6.500 3v7" stroke="#274f82" /></Icon></IconButton>
      <span className="ml-[4px] h-3 w-px bg-white" />
      <IconButton label="Record" className="size-[14px]"><Icon w={13}><path d="M.5.500h12v12H.5z" fill="#d5d7da" stroke="#92979d" /><circle cx="6.500" cy="6.500" r="4.500" fill="#e21717" stroke="#991010" /></Icon></IconButton>
      <IconButton label="Upload" className="ml-1 mr-0.5 size-[13px]"><Icon w={13}><path d="M6.500 1 12 6H9v3H4V6H1z" fill="#35c735" stroke="#13821a" /><path d="M3 10h7v2H3z" fill="#29aa2c" /></Icon></IconButton>
    </footer>
  );
}

const WinLogo = ({ w = 20 }: { w?: number }) => <Icon w={w} box="0 0 20 20"><path d="M0 3 8 1.800V9.500H0zM9 1.600 20 0v9.500H9zM0 10.500h8v7.700L0 17zM9 10.500h11V20L9 18.400z" fill="#fff" /></Icon>;

function Taskbar() {
  const slot = "h-full w-[46px]";
  const open = "h-[29px] w-[44px] border border-[#c5aca5] bg-white/20 mx-px";
  return (
    <footer className="flex h-[30px] items-center bg-[linear-gradient(90deg,transparent_18%,#5b5280_18.4%,#6b5f8a_19%,transparent_19.6%,transparent_40.9%,#625a98_41.2%,#625a98_41.5%,#8d6f70_42.3%,transparent_44%,transparent_52.3%,#5e5796_52.6%,#5e5796_53%,#88706f_53.6%,transparent_55.500%,transparent_66.8%,#57508f_67.3%,#66609a_68.1%,#8a6f66_69%,transparent_71%,transparent_84.8%,#5b5087_85.3%,transparent_86.6%),linear-gradient(90deg,#9b7061,#956f63_25%,#9c7a61_40%,#96706a_47%,#9e7e60_52%,#98716a_55%,#9e7e60_60%,#9d7e60_75%,#946a5e_82%,#8f6156_90%,#956c5d)] text-white">
      <IconButton label="Start" className="h-full w-[39px]"><WinLogo /></IconButton>
      <IconButton label="File Explorer" className={slot}><Icon w={24}><path d="M0 2h9l2 2h11v17H0z" fill="#f2d36f" /><path d="M2 4h19v12H2z" fill="#fff3bd" /><path d="M0 7h23v12H0z" fill="#f8df8b" /><path d="M4 2h4M10 3h4" stroke="#43a943" /><path d="M4 14h15v8h-4v-4H8v4H4z" fill="#8fd1f4" stroke="#3a90c8" /></Icon></IconButton>
      <IconButton label="Store" className={slot}><Icon w={23}><path d="M0 0h23v22H0z" fill="#0a8a0a" /><path d="M4 7 19 6v13L4 17z" fill="#fff" /><path d="M8 7c0-5 7-5 7-1" fill="none" stroke="#fff" strokeWidth="1.500" /><path d="m7 9 4-.3v3H7zM12 8.500l4-.5v3.700h-4zM7 12.500h4v3.200L7 15zM12 12.500h4v4l-4-.6z" fill="#0a8a0a" /></Icon></IconButton>
      <IconButton label="Camera" className={slot}><Icon w={24}><rect width="24" height="24" rx="4" fill="#111" /><circle cx="12" cy="10.500" r="7" fill="#dcdcdc" /><circle cx="12" cy="11" r="5" fill="#222" /><circle cx="12" cy="11" r="3" fill="#f2f5f0" /><circle cx="12" cy="11" r="1.500" fill="#56b94e" /><path d="M3 19c5-3 11-3 18-2" stroke="#e34c38" strokeWidth="1.500" fill="none" /><path d="M5 21c4-2 11 0 16-5" stroke="#4d9cf0" strokeWidth="1.300" fill="none" /><path d="M10 20c4 0 7 0 11-3" stroke="#e9cb32" fill="none" /></Icon></IconButton>
      <IconButton label="HP" className={slot}><Icon w={24}><circle cx="12" cy="12" r="12" fill="#fff" /><path d="M10.500 0 5.500 16.500M7.500 9.500c3-1.500 4.500-1 4 1L10 16.500M16.500 8l-5 16M16 8.500c4-1 4.500.5 3.500 3.500s-2 4-5.500 4" fill="none" stroke="#96695d" strokeWidth="1.700" /></Icon></IconButton>
      <IconButton label="Internet Explorer" className={open}><Icon w={24}><path d="M21 14H9c0 5 6 5 8 2h4c-3 8-17 7-17-3S21 2 21 14zM9 10.500h7.500c0-4-7.500-4-7.500 0z" fill="#45baf0" stroke="#1785c8" strokeWidth=".7" fillRule="evenodd" /><path d="M21 4C19-1 6 5 3 14c-2 5-1 8 2 8-5 1-5-4-3-9C6 4 21-3 22 3z" fill="#f8cf35" stroke="#d8a520" strokeWidth=".5" /></Icon></IconButton>
      <IconButton label="Solid Edge" className="mx-px h-[29px] w-[44px] border border-[#eee1dc] bg-white/50"><Icon w={24}><SolidEdgeMark /></Icon></IconButton>
      <IconButton label="Paint" className={open}><Icon w={24}><path d="M1 15C2 7 14 6 19 11c3 4-1 4-3 4s-1 5-5 6c-6 0-10-2-10-6z" fill="#b5dcf5" stroke="#5d9bc6" /><circle cx="7" cy="12" r="2" fill="#dc3f33" /><circle cx="12" cy="10" r="2" fill="#f2ca37" /><circle cx="5" cy="16" r="1.800" fill="#4caf50" /><circle cx="10" cy="18" r="1.800" fill="#4677d0" /><path d="M15 22 20 5" stroke="#c77e31" strokeWidth="2" /><path d="m19 6 1-5 3 1-1 5z" fill="#8d5a2d" /></Icon></IconButton>
      <div className="ml-auto flex items-center pr-[12px]">
        <IconButton label="Keyboard" className="h-6 w-[23px]"><Icon w={23} h={13}><path d="M.5.500h22v12H.5z" fill="#8c6057" stroke="#fff" /><path d="M2 3.500h19M2 6.500h19" stroke="#fff" strokeWidth="2" strokeDasharray="2 1" /><path d="M3 9.500h2m1 0h11m1 0h3" stroke="#fff" strokeWidth="1.500" /></Icon></IconButton>
        <IconButton label="Help" className="ml-[9px] size-6"><Icon w={24}><circle cx="12" cy="12" r="11" fill="#071e43" stroke="#1a78bd" strokeWidth="1.500" /><path d="M8.500 9c0-5 8-5 8 0 0 3-4 3-4 6" fill="none" stroke="#fff" strokeWidth="3" /><circle cx="12.500" cy="19" r="1.800" fill="#fff" /></Icon></IconButton>
        <IconButton label="Hidden icons" className="ml-[6px] h-6 w-4"><Caret color="#fff" className="rotate-180" /></IconButton>
        <IconButton label="Windows update" className="ml-0.5 h-6 w-4"><WinLogo w={12} /></IconButton>
        <IconButton label="Battery" className="ml-0.5 h-6 w-4"><Icon w={12}><path d="M5.500 2.500h5v9h-5zM7 1h2" stroke="#fff" fill="none" strokeWidth="1.300" /><path d="M7 6h2v4H7z" fill="#fff" /><path d="M1 1v3h3V1M2.500 4v7" stroke="#fff" fill="none" /></Icon></IconButton>
        <IconButton label="Volume" className="ml-0.5 h-6 w-4"><Icon w={13}><path d="M0 5h2l4-3v10L2 9H0z" fill="#fff" /><path d="M8 5v4M10 3.500c1.500 2 1.500 5 0 7" stroke="#fff" fill="none" /></Icon></IconButton>
        <time className="ml-[10px] w-10 text-center text-[8px] leading-3">8:56 PM<br />11/6/2015</time>
      </div>
    </footer>
  );
}

export default function App() {
  return (
    <div className="min-h-screen bg-white">
      <div className="relative flex min-h-[75vh] w-3/4 flex-col overflow-hidden font-['Noto_Sans','Open_Sans',sans-serif]">
        <Defs />
        <Header />
        <Ribbon />
        <Workspace />
        <StatusBar />
        <Taskbar />
      </div>
    </div>
  );
}
